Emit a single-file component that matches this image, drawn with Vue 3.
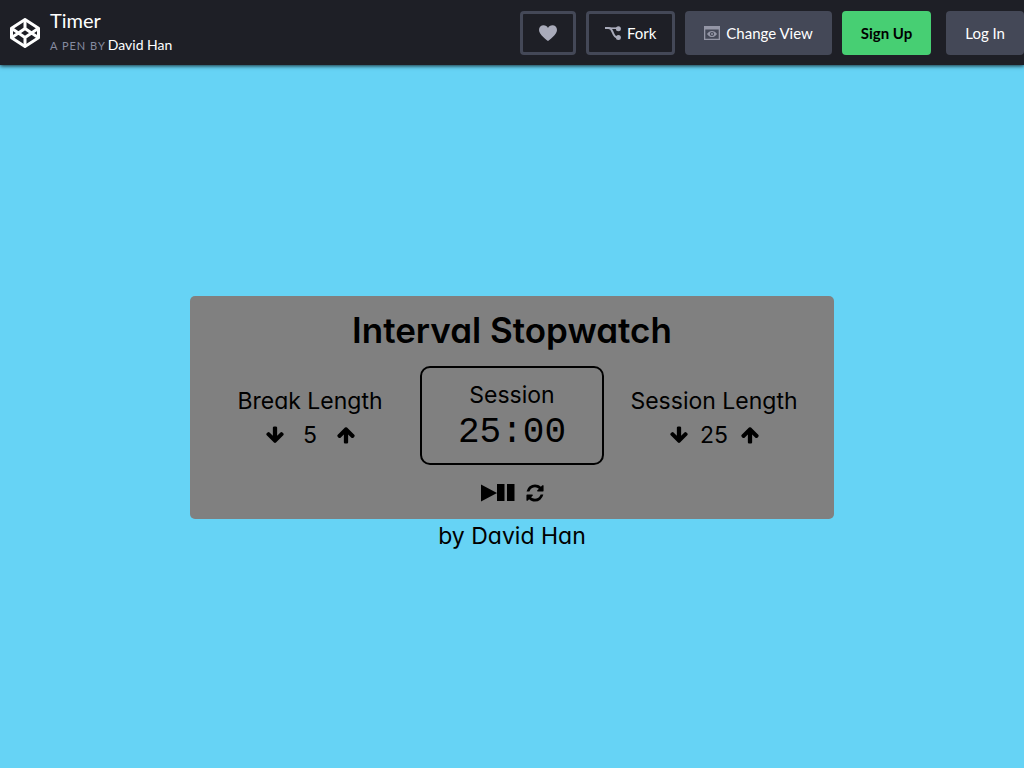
<script setup>
import { ref, computed, onUnmounted } from 'vue'

const breakLength = ref(5)
const sessionLength = ref(25)
const remaining = ref(25 * 60)
const phase = ref('Session')
let timer = null

const clock = computed(() => {
  const m = String(Math.floor(remaining.value / 60)).padStart(2, '0')
  const s = String(remaining.value % 60).padStart(2, '0')
  return `${m}:${s}`
})

function changeBreak(step) {
  breakLength.value = Math.min(60, Math.max(1, breakLength.value + step))
}

function changeSession(step) {
  sessionLength.value = Math.min(60, Math.max(1, sessionLength.value + step))
  if (!timer) remaining.value = sessionLength.value * 60
}

function stop() {
  clearInterval(timer)
  timer = null
}

function tick() {
  if (remaining.value > 0) {
    remaining.value -= 1
    return
  }
  phase.value = phase.value === 'Session' ? 'Break' : 'Session'
  remaining.value = (phase.value === 'Session' ? sessionLength.value : breakLength.value) * 60
}

function toggle() {
  if (timer) stop()
  else timer = setInterval(tick, 1000)
}

function reset() {
  stop()
  breakLength.value = 5
  sessionLength.value = 25
  remaining.value = 25 * 60
  phase.value = 'Session'
}

onUnmounted(stop)

const arrowDown = 'M1675 832q0 53-37 90l-651 652q-39 37-91 37-53 0-90-37l-651-652q-38-36-38-90 0-53 38-91l74-75q39-37 91-37 53 0 90 37l294 294v-704q0-52 38-90t90-38h128q52 0 90 38t38 90v704l294-294q37-37 90-37 52 0 91 37l75 75q37 39 37 91z'
const arrowUp = 'M1675 971q0 51-37 90l-75 75q-38 38-91 38-54 0-90-38l-294-293v704q0 52-37.5 84.5t-90.5 32.5h-128q-53 0-90.5-32.5t-37.5-84.5v-704l-294 293q-36 38-90 38t-90-38l-75-75q-38-38-38-90 0-53 38-91l651-651q35-37 90-37 54 0 91 37l651 651q37 39 37 91z'
const refresh = 'M1639 1056q0 5-1 7-64 268-268 434.5t-478 166.5q-146 0-282.5-55t-243.5-157l-129 129q-19 19-45 19t-45-19-19-45v-448q0-26 19-45t45-19h448q26 0 45 19t19 45-19 45l-137 137q71 66 161 102t187 36q134 0 250-65t186-179q11-17 53-117 8-23 30-23h192q13 0 22.5 9.5t9.5 22.5zm25-800v448q0 26-19 45t-45 19h-448q-26 0-45-19t-19-45 19-45l138-138q-148-137-349-137-134 0-250 65t-186 179q-11 17-53 117-8 23-30 23h-199q-13 0-22.5-9.5t-9.5-22.5v-7q65-268 270-434.5t480-166.5q146 0 284 55.5t245 156.5l130-129q19-19 45-19t45 19 19 45z'
</script>

<template>
  <div class="page">
    <header class="bar">
      <a class="logo" href="#" aria-label="Home">
        <svg viewBox="0 0 30 30" width="30" height="30" fill="none" stroke="#fff" stroke-width="3" stroke-linejoin="round">
          <path d="M15 1.5 28.5 10.2V19.8L15 28.5 1.5 19.8V10.2Z" />
          <path d="M15 1.5V10.5M15 19.5V28.5M1.5 10.2 15 19.5 28.5 10.2M1.5 19.8 15 10.5 28.5 19.8" />
        </svg>
      </a>
      <div class="meta">
        <h1 class="pen-title">Timer</h1>
        <p class="byline"><span class="caption">A Pen By</span><a class="author" href="#">David Han</a></p>
      </div>
      <nav class="actions">
        <button class="btn outline" type="button" aria-label="Love this pen">
          <svg viewBox="0 0 18 16" width="18" height="16" fill="#a9abba">
            <path d="M9 16C7.600 14.800 0 9.600 0 4.900 0 2 2 .3 4.600.3 6.500.3 8.200 1.300 9 3 9.800 1.300 11.500.3 13.400.3 16 .3 18 2 18 4.900 18 9.600 10.400 14.800 9 16Z" />
          </svg>
        </button>
        <button class="btn outline" type="button">
          <svg viewBox="0 0 16 14" width="16" height="14" fill="#a9abba">
            <path d="M0 2H3.500C6.500 2 7 4.500 8 7 9 9.800 9.800 11.300 12.500 11.300" fill="none" stroke="#a9abba" stroke-width="2" />
            <path d="M3 2.200H12.500" stroke="#a9abba" stroke-width="1.600" />
            <circle cx="13.400" cy="2.700" r="2.500" />
            <circle cx="13.400" cy="11.400" r="2.500" />
          </svg>
          Fork
        </button>
        <button class="btn" type="button">
          <svg viewBox="0 0 16 14" width="16" height="14" fill="#9496a6">
            <path fill-rule="evenodd" d="M0 0H16V14H0ZM1.300 3.500V12.700H14.700V3.500Z" />
            <path fill-rule="evenodd" d="M3 8C4.300 5.900 6 4.900 8 4.900S11.700 5.900 13 8C11.700 10.100 10 11.100 8 11.100S4.300 10.100 3 8ZM8 5.900A2.100 2.100 0 1 0 8 10.100 2.100 2.100 0 1 0 8 5.900Z" />
            <circle cx="8" cy="8" r="1" />
          </svg>
          Change View
        </button>
        <button class="btn green" type="button">Sign Up</button>
        <button class="btn login" type="button">Log In</button>
      </nav>
    </header>

    <main class="stage">
      <section class="panel">
        <h2 class="heading">Interval Stopwatch</h2>
        <div class="columns">
          <div class="setting">
            <div>Break Length</div>
            <div class="stepper">
              <button class="icon" type="button" aria-label="Decrease break" @click="changeBreak(-1)">
                <svg viewBox="0 0 1792 1792" width="20" height="20"><path :d="arrowDown" /></svg>
              </button>
              <span class="value">{{ breakLength }}</span>
              <button class="icon" type="button" aria-label="Increase break" @click="changeBreak(1)">
                <svg viewBox="0 0 1792 1792" width="20" height="20"><path :d="arrowUp" /></svg>
              </button>
            </div>
          </div>
          <div class="display">
            <div class="phase">{{ phase }}</div>
            <div class="clock">{{ clock }}</div>
          </div>
          <div class="setting">
            <div>Session Length</div>
            <div class="stepper">
              <button class="icon" type="button" aria-label="Decrease session" @click="changeSession(-1)">
                <svg viewBox="0 0 1792 1792" width="20" height="20"><path :d="arrowDown" /></svg>
              </button>
              <span class="value">{{ sessionLength }}</span>
              <button class="icon" type="button" aria-label="Increase session" @click="changeSession(1)">
                <svg viewBox="0 0 1792 1792" width="20" height="20"><path :d="arrowUp" /></svg>
              </button>
            </div>
          </div>
        </div>
        <div class="controls">
          <button class="icon" type="button" aria-label="Start or pause" @click="toggle">
            <svg viewBox="0 0 34 18" width="34" height="18"><path d="M0 0.500 16 9 0 17.500ZM16 0H23.500V17H16ZM26 0H33.500V17H26Z" /></svg>
          </button>
          <button class="icon" type="button" aria-label="Reset" @click="reset">
            <svg viewBox="0 0 1792 1792" width="20" height="20"><path :d="refresh" /></svg>
          </button>
        </div>
      </section>
      <p class="credit">by David Han</p>
    </main>
  </div>
</template>

<style>
body {
  margin: 0;
  background: #66d3f5;
}
</style>

<style scoped>
.page {
  min-height: 100vh;
  display: flex;
  flex-direction: column;
  color: #000;
  background: #66d3f5;
}
.bar {
  display: flex;
  align-items: center;
  height: 65px;
  padding-left: 10px;
  background: #1e1f26;
  box-shadow: 0 1px 4px rgba(0, 0, 0, 0.8);
  font-family: Lato, sans-serif;
  color: #fff;
}
.logo,
.logo svg {
  display: block;
}
.meta {
  margin-left: 10px;
}
.pen-title {
  margin: 0;
  font-size: 20px;
  font-weight: 400;
  line-height: 24px;
}
.byline {
  display: flex;
  align-items: baseline;
  gap: 2px;
  margin: 0;
  font-size: 14px;
  line-height: 25px;
}
.caption {
  color: #868ca0;
  font-size: 11px;
  letter-spacing: 1px;
  text-transform: uppercase;
}
.author {
  color: #fff;
  text-decoration: none;
}
.actions {
  display: flex;
  gap: 10px;
  margin-left: auto;
}
.btn {
  display: flex;
  align-items: center;
  gap: 6px;
  height: 44px;
  padding: 0 19px;
  border: 0;
  border-radius: 4px;
  background: #444857;
  color: #fff;
  font: 400 15px Lato, sans-serif;
  white-space: nowrap;
}
.outline {
  padding: 0 16px;
  border: 3px solid #444857;
  background: transparent;
}
.green {
  background: #47cf73;
  color: #000;
  font-weight: 700;
}
.login {
  margin-left: 5px;
}
.stage {
  flex: 1;
  display: flex;
  flex-direction: column;
  align-items: center;
  justify-content: center;
  padding-top: 16px;
  font-family: Inter, sans-serif;
  font-feature-settings: "cv11";
  font-size: 23px;
  line-height: 35px;
  text-align: center;
}
.panel {
  box-sizing: border-box;
  width: 100%;
  max-width: 644px;
  padding: 8px 20px 16px;
  border-radius: 5px;
  background: #808080;
}
.heading {
  margin: 0 0 10px;
  font-size: 35px;
  font-weight: 600;
  line-height: 52px;
}
.columns {
  display: grid;
  grid-template-columns: repeat(3, 184px);
  justify-content: center;
  align-items: center;
  gap: 18px;
}
.setting {
  padding-top: 4px;
  white-space: nowrap;
}
.stepper {
  display: flex;
  align-items: center;
  justify-content: center;
  gap: 10px;
  line-height: 32px;
}
.value {
  width: 31px;
}
.icon {
  display: flex;
  padding: 0;
  border: 0;
  background: none;
  color: #000;
}
.display {
  box-sizing: border-box;
  padding: 10px 0;
  border: 2px solid #000;
  border-radius: 10px;
}
.clock {
  font-family: "Liberation Mono", monospace;
  font-size: 36px;
  line-height: 40px;
}
.controls {
  display: flex;
  align-items: center;
  justify-content: center;
  gap: 10px;
  margin-top: 18px;
  padding-left: 2px;
}
.credit {
  margin: 0;
}
</style>
